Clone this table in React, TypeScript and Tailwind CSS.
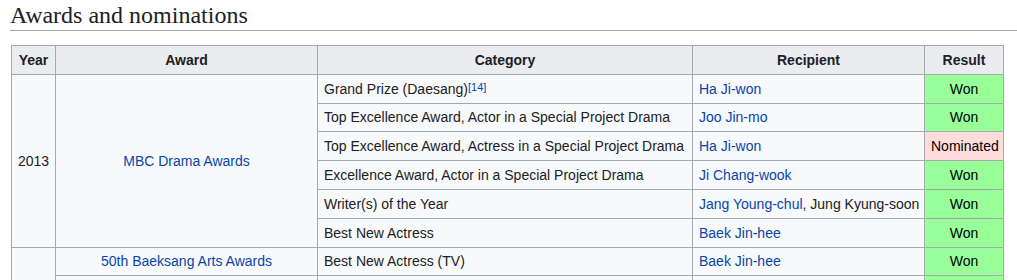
type Row = {
  year?: { text: string; span: number }
  award?: { text: string; span: number }
  category: string
  cite?: string
  recipient: { text: string; link: boolean }[]
  result: 'Won' | 'Nominated' | ''
}

const ROWS: Row[] = [
  {
    year: { text: '2013', span: 6 },
    award: { text: 'MBC Drama Awards', span: 6 },
    category: 'Grand Prize (Daesang)',
    cite: '[14]',
    recipient: [{ text: 'Ha Ji-won', link: true }],
    result: 'Won',
  },
  { category: 'Top Excellence Award, Actor in a Special Project Drama', recipient: [{ text: 'Joo Jin-mo', link: true }], result: 'Won' },
  { category: 'Top Excellence Award, Actress in a Special Project Drama', recipient: [{ text: 'Ha Ji-won', link: true }], result: 'Nominated' },
  { category: 'Excellence Award, Actor in a Special Project Drama', recipient: [{ text: 'Ji Chang-wook', link: true }], result: 'Won' },
  {
    category: 'Writer(s) of the Year',
    recipient: [
      { text: 'Jang Young-chul', link: true },
      { text: ', Jung Kyung-soon', link: false },
    ],
    result: 'Won',
  },
  { category: 'Best New Actress', recipient: [{ text: 'Baek Jin-hee', link: true }], result: 'Won' },
  {
    year: { text: '', span: 2 },
    award: { text: '50th Baeksang Arts Awards', span: 1 },
    category: 'Best New Actress (TV)',
    recipient: [{ text: 'Baek Jin-hee', link: true }],
    result: 'Won',
  },
  // next row only peeks in at the bottom edge
  { award: { text: '', span: 1 }, category: '', recipient: [], result: '' },
]

const td = 'border border-[#a2a9b1] px-[6px] py-[2.8px] leading-[22.2px]'
const th = 'border border-[#a2a9b1] bg-[#eaecf0] px-[6px] py-[2.8px] leading-[22.2px] text-center font-bold'

export default function App() {
  return (
    <div className="h-[280px] overflow-hidden bg-white pl-[10px] text-[#202122]">
      <h2 className="border-b border-[#a2a9b1] pt-[2px] pb-[1px] font-['Liberation_Serif',serif] text-[24px] leading-[27px]">
        Awards and nominations
      </h2>
      <table className="mt-[14px] ml-px w-[992px] table-fixed border-collapse bg-[#f8f9fa] font-['Liberation_Sans',Arial,sans-serif] text-[14px]">
        <colgroup>
          <col className="w-[44px]" />
          <col className="w-[262px]" />
          <col className="w-[375px]" />
          <col className="w-[232px]" />
          <col className="w-[79px]" />
        </colgroup>
        <thead>
          <tr>
            <th className={th}>Year</th>
            <th className={th}>Award</th>
            <th className={th}>Category</th>
            <th className={th}>Recipient</th>
            <th className={th}>Result</th>
          </tr>
        </thead>
        <tbody>
          {ROWS.map((r, i) => (
            <tr key={i}>
              {r.year && (
                <td rowSpan={r.year.span} className={td}>
                  {r.year.text}
                </td>
              )}
              {r.award && (
                <td rowSpan={r.award.span} className={`${td} text-center text-[#0645ad]`}>
                  {r.award.text}
                </td>
              )}
              <td className={`${td} whitespace-nowrap`}>
                {r.category}
                {r.cite && (
                  <sup className="relative -top-[3px] text-[11px] leading-none text-[#0645ad]">{r.cite}</sup>
                )}
              </td>
              <td className={`${td} whitespace-nowrap`}>
                {r.recipient.map((p, j) => (
                  <span key={j} className={p.link ? 'text-[#0645ad]' : ''}>
                    {p.text}
                  </span>
                ))}
              </td>
              <td
                className={`${td} text-center text-black ${
                  r.result === 'Won' ? 'bg-[#99ff99]' : r.result === 'Nominated' ? 'bg-[#ffdddd]' : 'bg-[#99ff99]'
                }`}
              >
                {r.result}
              </td>
            </tr>
          ))}
        </tbody>
      </table>
    </div>
  )
}
